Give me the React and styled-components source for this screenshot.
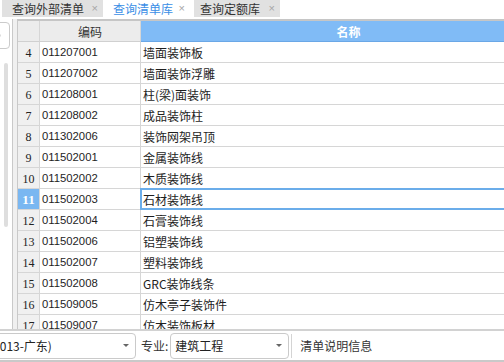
import React from 'react';
import styled, { createGlobalStyle } from 'styled-components';

const Global = createGlobalStyle`
  html, body { margin: 0; padding: 0; background: #fff; }
  body {
    width: 504px; height: 362px; overflow: hidden;
    font-family: "Noto Sans CJK SC", "Liberation Sans", sans-serif;
  }
`;

const Page = styled.div`
  width: 504px; height: 362px;
  display: flex; flex-direction: column;
  overflow: hidden; background: #fff;
`;

const TabBar = styled.div`
  height: 19px; flex-shrink: 0;
  display: flex; gap: 4px; align-items: flex-start;
  padding-left: ${p => p.$pl}px;
`;

const Tab = styled.div`
  box-sizing: border-box;
  height: 17px; width: ${p => p.$w}px;
  padding: 0 5px 0 ${p => p.$pl}px;
  display: flex; align-items: center; justify-content: space-between;
  background: ${p => (p.$active ? '#fff' : '#e1e1e1')};
  color: ${p => (p.$active ? '#3a8ee6' : '#333')};
  font-size: 12px; line-height: 17px; white-space: nowrap;
`;

const Close = styled.span`
  font-family: "Liberation Sans", sans-serif;
  font-size: 11px; color: #a6a6a6;
`;

const Main = styled.div`
  flex: 1; min-height: 0;
  display: flex;
`;

const SidePanel = styled.div`
  width: 12px; flex-shrink: 0;
  border-right: 1px solid #c9c9c9;
  display: flex; flex-direction: column;
  padding-top: 3px;
  overflow: hidden;
`;

const SearchBox = styled.div`
  box-sizing: border-box;
  width: 30px; height: 27px; margin-left: -20px;
  border: 1px solid #cbcbcb; border-radius: 4px;
  display: flex; align-items: center; justify-content: flex-end;
  padding-right: 7px;
  color: #bbb;
`;

const Thumb = styled.div`
  width: 4px; height: 164px;
  margin: 14px 0 0 4px;
  background: #dedede; border-radius: 2px;
`;

const Splitter = styled.div`
  width: 4px; flex-shrink: 0;
  background: #f0f0f0;
`;

const Grid = styled.div`
  flex: 1; min-width: 0;
  border-left: 1px solid #c9c9c9;
  border-top: 2px solid #c6c6c6;
  overflow: hidden;
`;

const Row = styled.div`
  display: grid;
  grid-template-columns: 22px 101px 400px;
  height: ${p => (p.$head ? 21 : 21)}px;
`;

const Cell = styled.div`
  box-sizing: border-box;
  position: relative;
  border-right: 1px solid #d6d6d6;
  border-bottom: 1px solid #d6d6d6;
  display: flex; align-items: center;
  white-space: nowrap; overflow: visible;
  color: #1e1e1e;
`;

const NumCell = styled(Cell)`
  justify-content: center;
  background: ${p => (p.$sel ? '#7ab7f1' : '#f0f0f0')};
  color: ${p => (p.$sel ? '#fff' : '#222')};
  font-family: "Liberation Serif", serif;
  font-size: ${p => (p.$sel ? 13 : 12)}px;
  font-weight: ${p => (p.$sel ? 700 : 400)};
  padding-top: 2px;
`;

const CodeCell = styled(Cell)`
  padding-left: 2px;
  font-family: "Liberation Sans", sans-serif;
  font-size: 11.3px;
`;

const NameCell = styled(Cell)`
  padding-left: 2px;
  font-size: 12px;
  border-right: none;
  ${p => p.$sel && `
    &::after {
      content: '';
      position: absolute;
      top: -1px; left: -1px; right: 0; bottom: -1px;
      border: 2px solid #6badea;
    }
  `}
`;

const HeadCell = styled(Cell)`
  justify-content: center;
  background: ${p => (p.$blue ? '#80bbf6' : '#ececec')};
  color: ${p => (p.$blue ? '#fff' : '#333')};
  font-weight: ${p => (p.$blue ? 700 : 400)};
  font-size: 12px;
  border-right-color: ${p => (p.$blue ? '#80bbf6' : '#d6d6d6')};
  border-bottom-color: ${p => (p.$blue ? '#6aa7e6' : '#d0d0d0')};
  ${p => p.$blue && 'padding-left: 16px;'}
`;

const BottomBar = styled.div`
  flex-shrink: 0;
  height: 29px;
  border-top: 2px solid #d2d2d2;
  border-bottom: 2px solid #c9c9c9;
  display: flex; align-items: center;
  font-size: 12px; color: #333;
  overflow: hidden;
`;

const Select = styled.div`
  box-sizing: border-box;
  flex-shrink: 0;
  width: ${p => p.$w}px; height: 26px;
  margin-left: ${p => p.$ml}px;
  border: 1px solid #cacaca; border-radius: 4px;
  padding: 0 6px 0 4px;
  display: flex; align-items: center; justify-content: space-between;
  color: #222; white-space: nowrap;
`;

const Caret = styled.span`
  width: 0; height: 0;
  border-left: 3px solid transparent;
  border-right: 3px solid transparent;
  border-top: 3px solid #666;
`;

const Label = styled.span`
  margin-left: 5px;
  color: #333;
`;

const Divider = styled.div`
  width: 1px; height: 24px; margin-left: 2px;
  background: #d4d4d4;
`;

const InfoText = styled.span`
  margin-left: 8px;
  color: #333;
`;

const rows = [
  [4, '011207001', '墙面装饰板'],
  [5, '011207002', '墙面装饰浮雕'],
  [6, '011208001', '柱(梁)面装饰'],
  [7, '011208002', '成品装饰柱'],
  [8, '011302006', '装饰网架吊顶'],
  [9, '011502001', '金属装饰线'],
  [10, '011502002', '木质装饰线'],
  [11, '011502003', '石材装饰线'],
  [12, '011502004', '石膏装饰线'],
  [13, '011502006', '铝塑装饰线'],
  [14, '011502007', '塑料装饰线'],
  [15, '011502008', 'GRC装饰线条'],
  [16, '011509005', '仿木亭子装饰件'],
  [17, '011509007', '仿木装饰板材'],
];

export default function App() {
  return (
    <Page>
      <Global />
      <TabBar $pl={2}>
        <Tab $w={101} $pl={10}>查询外部清单<Close>×</Close></Tab>
        <Tab $w={83} $pl={6} $active>查询清单库<Close>×</Close></Tab>
        <Tab $w={86} $pl={6}>查询定额库<Close>×</Close></Tab>
      </TabBar>
      <Main>
        <SidePanel>
          <SearchBox>
            <svg width="8" height="8" viewBox="0 0 8 8">
              <circle cx="3.5" cy="3.5" r="2.6" fill="none" stroke="#bbb" strokeWidth="1" />
            </svg>
          </SearchBox>
          <Thumb />
        </SidePanel>
        <Splitter />
        <Grid>
          <Row $head>
            <HeadCell />
            <HeadCell>编码</HeadCell>
            <HeadCell $blue>名称</HeadCell>
          </Row>
          {rows.map(([n, code, name]) => {
            const sel = n === 11;
            return (
              <Row key={n}>
                <NumCell $sel={sel}>{n}</NumCell>
                <CodeCell>{code}</CodeCell>
                <NameCell $sel={sel}>{name}</NameCell>
              </Row>
            );
          })}
        </Grid>
      </Main>
      <BottomBar>
        <Select $w={152} $ml={-16}>(2013-广东)<Caret /></Select>
        <Label>专业:</Label>
        <Select $w={119} $ml={2}>建筑工程<Caret /></Select>
        <Divider />
        <InfoText>清单说明信息</InfoText>
      </BottomBar>
    </Page>
  );
}
